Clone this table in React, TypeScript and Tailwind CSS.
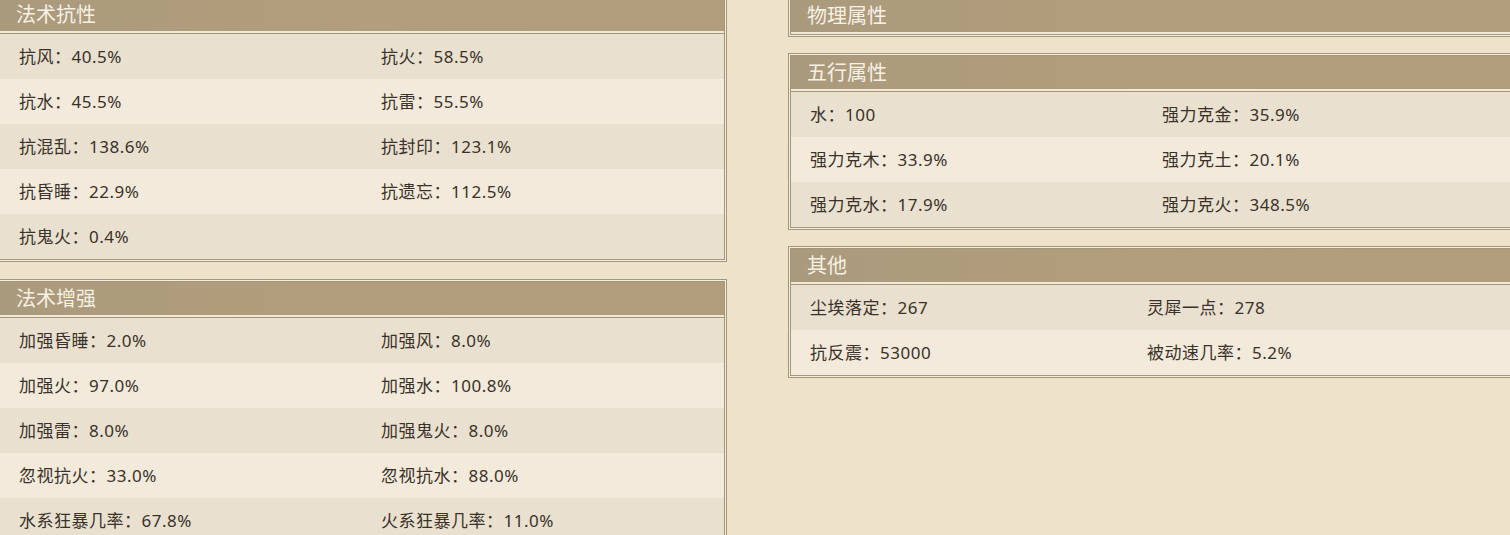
import React from "react";

type Row = [string, string];

const font = { fontFamily: '"Noto Sans", "Noto Sans CJK SC", sans-serif' };

function Panel({ title, rows, col }: { title: string; rows: Row[]; col: string }) {
  return (
    <div className="border border-[#a2967b] bg-[#f4ecdc] p-px">
      <div className="border border-[#a2967b]">
        <div className="flex h-[33px] items-center bg-gradient-to-r from-[#aa9a7c] via-[#b29e7c] to-[#b19d7b] px-4 text-[20px] text-[#f7f1e4]">
          {title}
        </div>
        <div className="h-[2px] bg-[#f1e8d6]" />
        {rows.length > 0 && (
          <div className="border-t border-[#a2967b]">
            {rows.map((r, i) => (
              <div
                key={i}
                className={`flex h-[45px] items-center text-[17px] tracking-[0.5px] text-[#3a322a] ${
                  i % 2 === 0 ? "bg-[#e9e0cf]" : "bg-[#f3eadb]"
                }`}
              >
                <div className={`${col} shrink-0 pl-[19px]`}>{r[0]}</div>
                <div className="pl-[19px]">{r[1]}</div>
              </div>
            ))}
          </div>
        )}
      </div>
    </div>
  );
}

export default function App() {
  return (
    <div className="h-[535px] w-[1510px] overflow-hidden bg-[#eee3ca]" style={font}>
      <div className="ml-[-3px] flex gap-[61px]">
        <div className="mt-[-5px] flex w-[730px] shrink-0 flex-col gap-[17px]">
          <Panel
            title="法术抗性"
            col="w-[362px]"
            rows={[
              ["抗风：40.5%", "抗火：58.5%"],
              ["抗水：45.5%", "抗雷：55.5%"],
              ["抗混乱：138.6%", "抗封印：123.1%"],
              ["抗昏睡：22.9%", "抗遗忘：112.5%"],
              ["抗鬼火：0.4%", ""],
            ]}
          />
          <Panel
            title="法术增强"
            col="w-[362px]"
            rows={[
              ["加强昏睡：2.0%", "加强风：8.0%"],
              ["加强火：97.0%", "加强水：100.8%"],
              ["加强雷：8.0%", "加强鬼火：8.0%"],
              ["忽视抗火：33.0%", "忽视抗水：88.0%"],
              ["水系狂暴几率：67.8%", "火系狂暴几率：11.0%"],
            ]}
          />
        </div>
        <div className="mt-[-4px] flex w-[740px] shrink-0 flex-col gap-[16px]">
          <Panel title="物理属性" col="w-[352px]" rows={[]} />
          <Panel
            title="五行属性"
            col="w-[352px]"
            rows={[
              ["水：100", "强力克金：35.9%"],
              ["强力克木：33.9%", "强力克土：20.1%"],
              ["强力克水：17.9%", "强力克火：348.5%"],
            ]}
          />
          <Panel
            title="其他"
            col="w-[337px]"
            rows={[
              ["尘埃落定：267", "灵犀一点：278"],
              ["抗反震：53000", "被动速几率：5.2%"],
            ]}
          />
        </div>
      </div>
    </div>
  );
}
